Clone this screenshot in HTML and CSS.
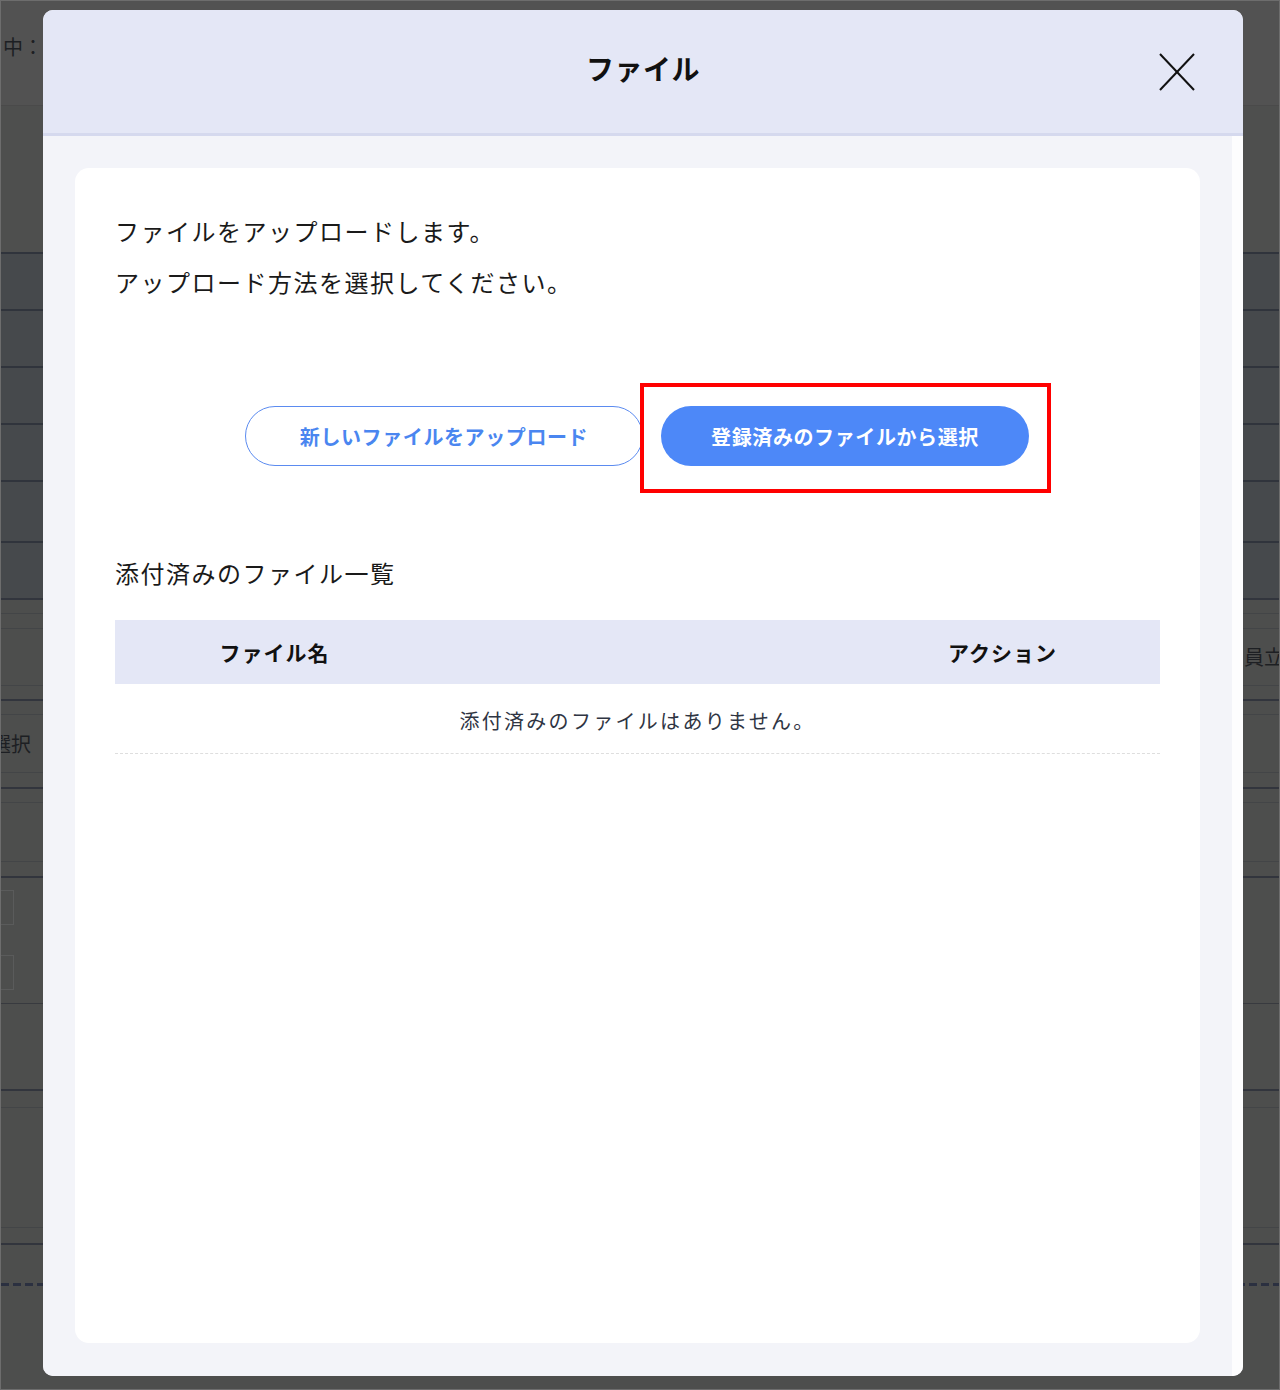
FILE: index.html
```html
<!DOCTYPE html>
<html lang="ja">
<head>
<meta charset="utf-8">
<title>ファイル</title>
<link rel="stylesheet" href="styles.css">
</head>
<body>
<div class="page">
  <div class="bg-top"><span class="bg-text">中：</span></div>
  <div class="bg-band"></div>
  <div class="bg-row"></div>
  <div class="bg-row"></div>
  <div class="bg-row"></div>
  <div class="bg-row"></div>
  <div class="bg-row bg-row--tall"></div>
  <div class="bg-row"></div>
  <div class="line-dark h15"></div>
  <div class="line-thin h15"></div>
  <div class="line-thin h57 bg-right"><span class="bg-text">員立</span></div>
  <div class="line-thin h14"></div>
  <div class="line-dark h15"></div>
  <div class="line-thin h58 bg-left"><span class="bg-text">選択</span></div>
  <div class="line-thin h15"></div>
  <div class="line-dark h15"></div>
  <div class="line-thin h59"></div>
  <div class="line-thin h15"></div>
  <div class="line-dark h127 bg-inputs"><span class="bg-input"></span><span class="bg-input"></span></div>
  <div class="line-mid h86"></div>
  <div class="line-dark h18"></div>
  <div class="line-thin h120"></div>
  <div class="line-thin h16"></div>
  <div class="line-dark h40"></div>
  <div class="line-dash"></div>
</div>

<div class="modal" role="dialog" aria-labelledby="modal-title">
  <header class="modal-header">
    <h1 id="modal-title" class="modal-title">ファイル</h1>
    <button class="close" type="button" aria-label="閉じる">
      <svg width="36" height="38" viewBox="0 0 36 38" aria-hidden="true">
        <line x1="1" y1="1" x2="35" y2="37" stroke="#111" stroke-width="2"/>
        <line x1="35" y1="1" x2="1" y2="37" stroke="#111" stroke-width="2"/>
      </svg>
    </button>
  </header>
  <div class="modal-main">
    <div class="modal-scroll">
      <section class="card">
        <p class="lead">ファイルをアップロードします。</p>
        <p class="lead">アップロード方法を選択してください。</p>

        <div class="actions">
          <button class="btn btn-outline" type="button">新しいファイルをアップロード</button>
          <div class="btn-wrap">
            <button class="btn btn-primary" type="button">登録済みのファイルから選択</button>
            <span class="highlight" aria-hidden="true"></span>
          </div>
        </div>

        <h2 class="section-title">添付済みのファイル一覧</h2>

        <div class="table">
          <div class="thead">
            <div class="th">ファイル名</div>
            <div class="th th-spacer"></div>
            <div class="th">アクション</div>
          </div>
          <div class="empty">添付済みのファイルはありません。</div>
        </div>
      </section>
    </div>
    <div class="scrollbar"></div>
  </div>
</div>
</body>
</html>
```

FILE: styles.css
```css
* { box-sizing: border-box; }

html, body {
  margin: 0;
  padding: 0;
}

body {
  width: 1280px;
  height: 1390px;
  overflow: hidden;
  font-family: "Noto Sans CJK JP", "Noto Sans", sans-serif;
  background: #4d4e4d;
  position: relative;
}

/* ---------- dimmed background page ---------- */
.page {
  height: 1390px;
  border: 1px solid #6d6d6d;
  background: #4d4e4d;
  display: flex;
  flex-direction: column;
  overflow: hidden;
}

.bg-text {
  font-size: 20px;
  color: #1d1f23;
  line-height: 1;
  white-space: nowrap;
}

.bg-top {
  height: 104px;
  flex: none;
  background: #525252;
  display: flex;
  align-items: center;
  padding-left: 2px;
  padding-bottom: 12px;
}

.bg-band {
  height: 147px;
  flex: none;
  background: #4e4f4e;
  border-top: 1px solid #4a4a4a;
}

.bg-row {
  height: 57px;
  flex: none;
  background: #46494c;
  border-top: 2px solid #30343c;
}
.bg-row--tall { height: 61px; }

.line-dark, .line-thin, .line-mid {
  flex: none;
  display: flex;
  align-items: center;
}
.line-dark { border-top: 2px solid #32353d; }
.line-thin { border-top: 1px solid #434547; }
.line-mid  { border-top: 1px solid #383a3f; }

.h14 { height: 14px; }
.h15 { height: 15px; }
.h16 { height: 16px; }
.h18 { height: 18px; }
.h40 { height: 40px; }
.h57 { height: 57px; }
.h58 { height: 58px; }
.h59 { height: 59px; }
.h86 { height: 86px; }
.h120 { height: 120px; }
.h127 { height: 127px; }

.bg-right { padding-left: 1243px; }
.bg-left .bg-text { margin-left: -10px; }

.bg-inputs {
  flex-direction: column;
  align-items: flex-start;
  justify-content: flex-start;
  padding-top: 12px;
  gap: 30px;
}
.bg-input {
  display: block;
  width: 13px;
  height: 35px;
  border: 1px solid #5a5b5b;
  border-left: none;
}

.line-dash {
  flex: none;
  height: 3px;
  background: repeating-linear-gradient(90deg, #2b3040 0 8px, transparent 8px 12px);
}

/* ---------- modal ---------- */
.modal {
  position: absolute;
  top: 10px;
  left: 43px;
  width: 1200px;
  height: 1366px;
  border-radius: 10px;
  overflow: hidden;
  display: flex;
  flex-direction: column;
  background: #f3f4f9;
}

.modal-header {
  flex: none;
  height: 126px;
  background: #e4e7f6;
  border-bottom: 3px solid #d5d9ee;
  display: flex;
  align-items: center;
  justify-content: center;
  position: relative;
  padding-bottom: 8px;
}

.modal-title {
  margin: 0;
  font-size: 28px;
  font-weight: 700;
  color: #111;
  letter-spacing: 0.5px;
  line-height: 1;
}

.close {
  position: absolute;
  right: 48px;
  top: 43px;
  width: 36px;
  height: 38px;
  padding: 0;
  border: 0;
  background: transparent;
  cursor: pointer;
}
.close svg { display: block; }

.modal-main {
  flex: 1;
  display: flex;
  min-height: 0;
}

.modal-scroll {
  flex: 1;
  background: #f3f4f9;
  padding: 32px 32px 33px 32px;
  display: flex;
}

.scrollbar {
  width: 11px;
  flex: none;
  background: #fdfdfe;
}

.card {
  flex: 1;
  background: #fff;
  border-radius: 14px;
  padding: 37px 40px 40px 40px;
}

.lead {
  margin: 0;
  font-size: 24px;
  line-height: 51px;
  letter-spacing: 1.5px;
  color: #1a1a1a;
}

.actions {
  margin-top: 99px;
  display: flex;
  justify-content: center;
  gap: 18px;
  padding-right: 1px;
}

.btn {
  height: 60px;
  border-radius: 30px;
  font-family: inherit;
  font-size: 20px;
  font-weight: 700;
  letter-spacing: 0.6px;
  padding: 0;
  cursor: pointer;
  display: flex;
  align-items: center;
  justify-content: center;
}

.btn-outline {
  width: 398px;
  background: #fff;
  border: 1px solid #5b8bf0;
  color: #4a86f0;
}

.btn-primary {
  width: 368px;
  background: #4d88f8;
  border: none;
  color: #fff;
}

.btn-wrap {
  position: relative;
}

.highlight {
  position: absolute;
  top: -23px;
  left: -21px;
  right: -22px;
  bottom: -27px;
  border: 4px solid #ff0000;
  pointer-events: none;
}

.section-title {
  margin: 89px 0 0 0;
  font-size: 24px;
  font-weight: 400;
  line-height: 36px;
  letter-spacing: 1.5px;
  color: #1a1a1a;
}

.table {
  margin-top: 29px;
}

.thead {
  display: grid;
  grid-template-columns: 319px 1fr 315px;
  height: 64px;
  background: #e4e7f6;
  align-items: center;
}

.th {
  text-align: center;
  font-size: 21px;
  font-weight: 700;
  letter-spacing: 1px;
  color: #111;
}

.empty {
  height: 70px;
  display: flex;
  align-items: center;
  justify-content: center;
  padding-top: 3px;
  font-size: 20px;
  letter-spacing: 2.3px;
  color: #2f3543;
  border-bottom: 1px dashed #dedede;
}
```
